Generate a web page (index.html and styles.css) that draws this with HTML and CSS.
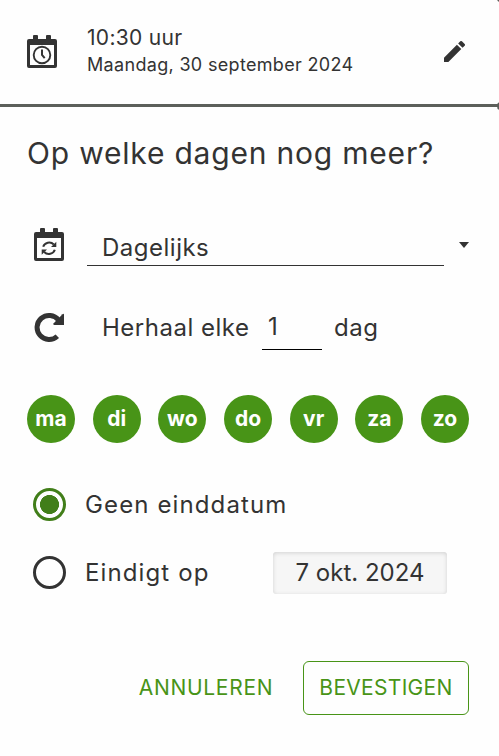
FILE: index.html
```
<!DOCTYPE html>
<html lang="nl">
<head>
  <meta charset="UTF-8">
  <meta name="viewport" content="width=device-width, initial-scale=1.0">
  <title>Herhaling instellen</title>
  <link rel="stylesheet" href="styles.css">
</head>
<body>
  <header class="moment">
    <svg class="icon-cal" viewBox="0 0 30 33">
      <path fill="currentColor" fill-rule="evenodd" d="M6 4V1Q6 0 7 0h3Q11 0 11 1V4h8V1Q19 0 20 0h3Q24 0 24 1V4h4q2 0 2 2v25q0 2-2 2H2q-2 0-2-2V6q0-2 2-2zM3 10v20h24V10z"/>
      <circle cx="15" cy="20" r="8.300" fill="none" stroke="currentColor" stroke-width="1.900"/>
      <path d="M15 14.500V20l2.700 3.200" fill="none" stroke="currentColor" stroke-width="2"/>
    </svg>
    <div class="moment-text">
      <div class="time">10:30 uur</div>
      <div class="date">Maandag, 30 september 2024</div>
    </div>
    <svg class="icon-edit" viewBox="3 3 18 18">
      <path fill="currentColor" d="M3 17.250V21h3.750L17.810 9.940l-3.750-3.750L3 17.250zM20.710 7.040a1 1 0 0 0 0-1.410l-2.340-2.340a1 1 0 0 0-1.410 0l-1.830 1.830 3.750 3.750 1.830-1.830z"/>
    </svg>
    <span class="corner corner-top"></span>
    <span class="corner corner-bottom"></span>
  </header>

  <main>
    <h1>Op welke dagen nog meer?</h1>

    <div class="row frequency">
      <svg class="icon-cal" viewBox="0 0 30 33">
        <path fill="currentColor" fill-rule="evenodd" d="M6 4V1Q6 0 7 0h3Q11 0 11 1V4h8V1Q19 0 20 0h3Q24 0 24 1V4h4q2 0 2 2v25q0 2-2 2H2q-2 0-2-2V6q0-2 2-2zM3 10v20h24V10z"/>
        <path d="M9.200 18.800a6.200 5.600 0 0 1 10.600-2.300M20.800 21.700a6.200 5.600 0 0 1-10.600 2.300" fill="none" stroke="currentColor" stroke-width="2"/>
        <path fill="currentColor" d="M22.300 13.700v5.300h-5.300zM7.700 26.800v-5.300h5.300z"/>
      </svg>
      <div class="select">Dagelijks</div>
      <span class="caret"></span>
    </div>

    <div class="row interval">
      <svg class="icon-redo" viewBox="0 0 30 30">
        <path d="M24.500 8A12 12 0 1 0 23.300 24.200" fill="none" stroke="currentColor" stroke-width="5"/>
        <path fill="currentColor" d="M28.500 2.300q1.500-1.200 1.500.5V13H20.300q-1.800-.3-.6-1.700z"/>
      </svg>
      <span class="label">Herhaal elke</span>
      <span class="number">1</span>
      <span class="unit">dag</span>
    </div>

    <div class="days">
      <span class="day">ma</span>
      <span class="day">di</span>
      <span class="day">wo</span>
      <span class="day">do</span>
      <span class="day">vr</span>
      <span class="day">za</span>
      <span class="day">zo</span>
    </div>

    <div class="option">
      <span class="radio checked"></span>
      <span class="option-label">Geen einddatum</span>
    </div>
    <div class="option">
      <span class="radio"></span>
      <span class="option-label end-label">Eindigt op</span>
      <span class="end-date">7 okt. 2024</span>
    </div>
  </main>

  <footer>
    <button class="btn cancel">ANNULEREN</button>
    <button class="btn confirm">BEVESTIGEN</button>
  </footer>
</body>
</html>
```
FILE: styles.css
```
* {
  box-sizing: border-box;
}

body {
  margin: 0;
  height: 756px;
  overflow: hidden;
  background: #fefefe;
  color: #333;
  font-family: Inter, "Open Sans", sans-serif;
  font-size: 24px;
  line-height: 30px;
  letter-spacing: 0.5px;
  white-space: nowrap;
}

svg {
  display: block;
  flex: none;
}

.icon-cal {
  width: 30px;
  height: 33px;
}

/* Gekozen tijdstip */
.moment {
  position: relative;
  display: flex;
  align-items: center;
  height: 107px;
  padding: 0 34px 2px 27px;
  border-bottom: 3px solid #5c5f5a;
}

.moment-text {
  flex: 1;
  margin-left: 30px;
}

.time {
  font-size: 21px;
  line-height: 28px;
  letter-spacing: 0.3px;
}

.date {
  font-size: 18px;
  line-height: 26px;
  letter-spacing: 0.32px;
}

.icon-edit {
  width: 21px;
  height: 21px;
}

.corner {
  position: absolute;
  right: -4px;
  width: 6px;
  height: 8px;
  border-radius: 50%;
  background: #5c5f5a;
}

.corner-top {
  top: -6px;
}

.corner-bottom {
  bottom: -6px;
}

main {
  padding: 0 30px 0 27px;
}

h1 {
  margin: 26px 0 0;
  font-size: 30px;
  line-height: 40px;
  font-weight: 400;
  letter-spacing: 0.8px;
}

.row {
  display: flex;
  padding-left: 7px;
}

.frequency {
  margin-top: 55px;
}

.select {
  width: 357px;
  height: 38px;
  margin-left: 23px;
  padding: 5px 15px 0;
  border-bottom: 1px solid #333;
}

.caret {
  margin: 14px 0 0 15px;
  width: 10px;
  height: 6px;
  background: #333;
  clip-path: polygon(0 0, 100% 0, 50% 100%);
}

.interval {
  margin-top: 47px;
}

.icon-redo {
  width: 30px;
  height: 30px;
  margin-top: -1px;
}

.label {
  width: 160px;
  margin-left: 38px;
}

.number {
  width: 60px;
  height: 38px;
  padding-left: 6px;
  margin-top: -1px;
  border-bottom: 1px solid #000;
}

.unit {
  margin-left: 12px;
}

/* Dagen van de week */
.days {
  display: flex;
  justify-content: space-between;
  margin-top: 45px;
}

.day {
  width: 48px;
  height: 48px;
  border-radius: 50%;
  background: #489417;
  color: #fff;
  font-size: 21px;
  line-height: 48px;
  font-weight: 700;
  letter-spacing: 0;
  text-align: center;
}

/* Einddatum */
.option {
  display: flex;
  align-items: center;
  height: 42px;
  padding-left: 6px;
  margin-top: 26px;
}

.days + .option {
  margin-top: 41px;
}

.radio {
  width: 33px;
  height: 33px;
  margin-top: -1px;
  border: 3px solid #333;
  border-radius: 50%;
}

.radio.checked {
  border-color: #417e19;
  background: radial-gradient(circle, #417e19 9.200px, transparent 9.800px);
}

.option-label {
  margin-left: 19px;
  letter-spacing: 1.12px;
}

.end-label {
  width: 188px;
}

.end-date {
  width: 174px;
  height: 42px;
  border-radius: 3px;
  background: #f6f6f6;
  box-shadow: inset 0 1px 4px rgba(0, 0, 0, 0.15);
  line-height: 42px;
  letter-spacing: 0;
  text-align: center;
}

footer {
  display: flex;
  justify-content: flex-end;
  margin-top: 67px;
  padding-right: 30px;
}

.btn {
  height: 54px;
  padding: 0 0 1px;
  border: 1px solid transparent;
  border-radius: 6px;
  background: none;
  color: #489417;
  font-family: inherit;
  font-size: 21px;
}

.cancel {
  width: 164px;
  letter-spacing: 0.7px;
}

.confirm {
  width: 166px;
  margin-left: 15px;
  border-color: #489417;
  letter-spacing: 0.3px;
}
```
